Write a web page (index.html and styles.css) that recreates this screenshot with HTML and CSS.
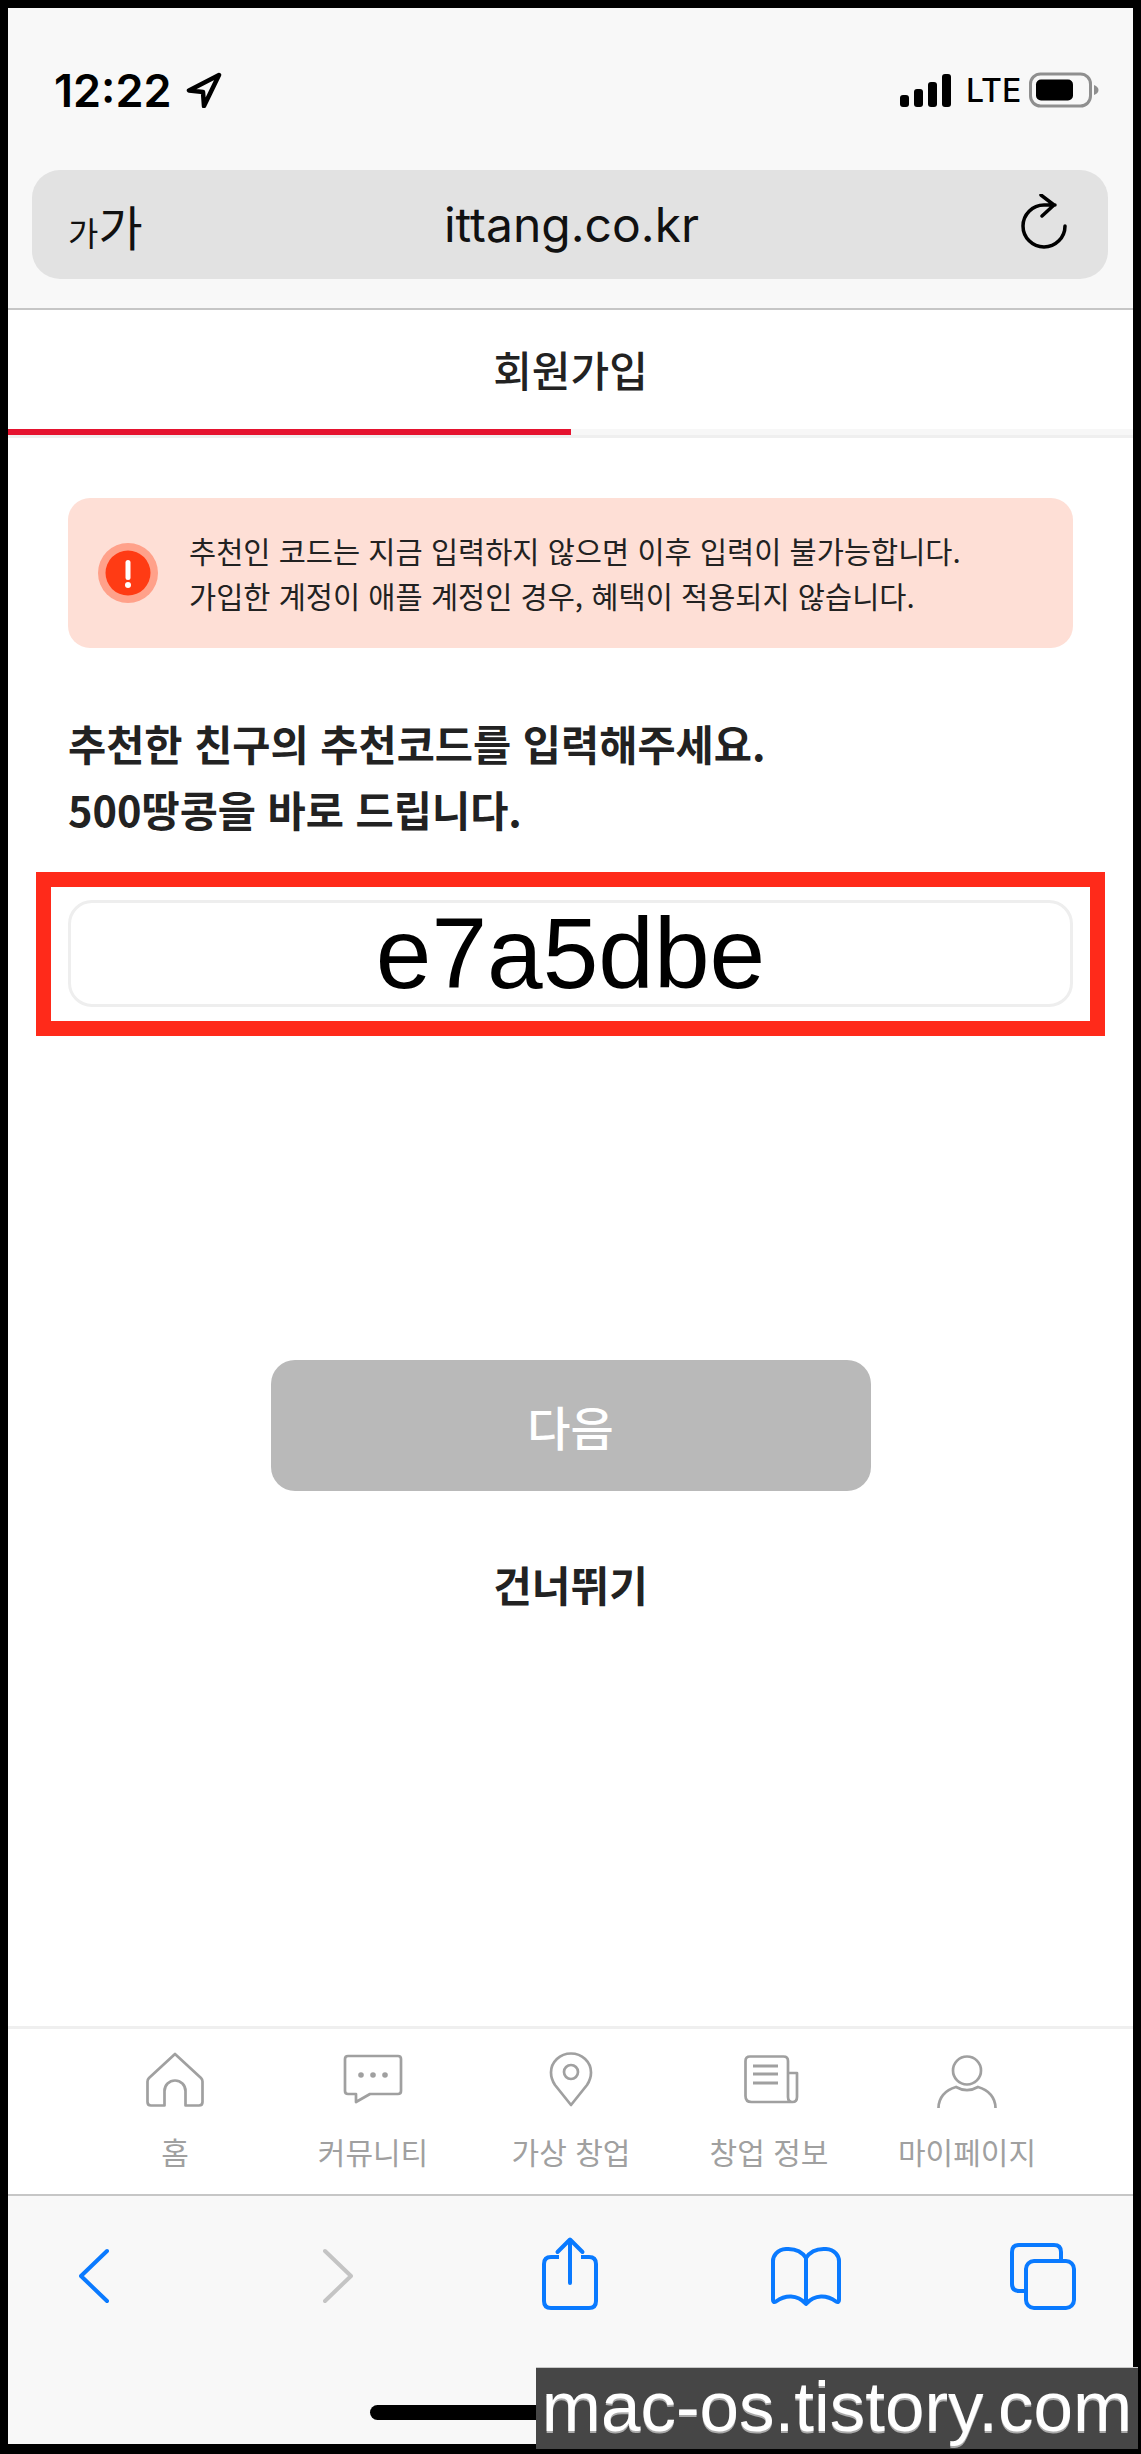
FILE: index.html
```html
<!DOCTYPE html>
<html lang="ko">
<head>
<meta charset="utf-8">
<title>회원가입</title>
<link rel="stylesheet" href="styles.css">
</head>
<body>
<div class="phone">
  <header class="browser-top">
    <div class="status">
      <div class="status-left">
        <span class="time">12:22</span>
        <svg class="loc" viewBox="0 0 36 36"><path d="M33 3 3 18.500l14 1.500 1 14z" fill="none" stroke="#000" stroke-width="4.500" stroke-linejoin="round"/></svg>
      </div>
      <div class="status-right">
        <svg class="signal" viewBox="0 0 51 34"><rect x="0" y="22" width="9" height="12" rx="3"/><rect x="14" y="16" width="9" height="18" rx="3"/><rect x="28" y="9" width="9" height="25" rx="3"/><rect x="42" y="1" width="9" height="33" rx="3"/></svg>
        <span class="lte">LTE</span>
        <svg class="battery" viewBox="0 0 70 36"><rect x="1.500" y="2" width="60" height="32" rx="10" fill="none" stroke="#8f8f8f" stroke-width="3"/><rect x="7" y="7.500" width="37" height="21" rx="5" fill="#000"/><path d="M65 13c3 1 4.500 3 4.500 5s-1.500 4-4.500 5z" fill="#8f8f8f"/></svg>
      </div>
    </div>
    <div class="urlbar">
      <span class="aa"><span class="aa-small">가</span><span class="aa-big">가</span></span>
      <span class="url">ittang.co.kr</span>
      <svg class="reload" viewBox="0 0 48 56"><path d="M45 32A21 21 0 1 1 24 11h11M21 1l13 10-12 11" fill="none" stroke="#000" stroke-width="3.500" stroke-linecap="round" stroke-linejoin="round"/></svg>
    </div>
  </header>

  <div class="title">회원가입</div>
  <div class="progress"><div class="progress-fill"></div></div>

  <main class="content">
    <div class="alert">
      <svg class="alert-icon" viewBox="0 0 60 60"><circle cx="30" cy="30" r="30" fill="#ffa18a"/><circle cx="30" cy="30" r="22.500" fill="#ff3b14"/><rect x="27.500" y="17" width="5" height="20" rx="2.500" fill="#fff"/><circle cx="30" cy="42" r="3" fill="#fff"/></svg>
      <p class="alert-text">추천인 코드는 지금 입력하지 않으면 이후 입력이 불가능합니다.<br>가입한 계정이 애플 계정인 경우, 혜택이 적용되지 않습니다.</p>
    </div>
    <h1 class="heading">추천한 친구의 추천코드를 입력해주세요.<br>500땅콩을 바로 드립니다.</h1>
    <div class="code-frame">
      <div class="code-input">e7a5dbe</div>
    </div>
    <button class="next" type="button">다음</button>
    <div class="skip">건너뛰기</div>
  </main>

  <nav class="tabbar">
    <div class="tab">
      <svg class="tab-icon" viewBox="0 0 60 56"><path d="M30 2 4 26q-1.500 1.500-1.500 3.500V50q0 3.500 3.500 3.500h13.500V39a10.500 10.500 0 0 1 21 0v14.500H54q3.500 0 3.500-3.500V29.500q0-2-1.500-3.500z" fill="none" stroke="#a0a0a0" stroke-width="2.700" stroke-linejoin="round"/></svg>
      <span class="tab-label">홈</span>
    </div>
    <div class="tab">
      <svg class="tab-icon" viewBox="0 0 60 56"><path d="M5 4h50q3 0 3 3v32q0 3-3 3H27l-14 8v-8H5q-3 0-3-3V7q0-3 3-3z" fill="none" stroke="#a0a0a0" stroke-width="2.700" stroke-linejoin="round"/><circle cx="18" cy="23" r="2.800" fill="#a0a0a0"/><circle cx="30" cy="23" r="2.800" fill="#a0a0a0"/><circle cx="42" cy="23" r="2.800" fill="#a0a0a0"/></svg>
      <span class="tab-label">커뮤니티</span>
    </div>
    <div class="tab">
      <svg class="tab-icon" viewBox="0 0 60 56"><path d="M30 53 14 33Q10 27 10 20.500a20 19 0 0 1 40 0Q50 27 46 33z" fill="none" stroke="#a0a0a0" stroke-width="2.700" stroke-linejoin="round"/><circle cx="30" cy="20" r="7" fill="none" stroke="#a0a0a0" stroke-width="2.700"/></svg>
      <span class="tab-label">가상 창업</span>
    </div>
    <div class="tab">
      <svg class="tab-icon" viewBox="0 0 60 56"><path d="M49 21h9v24q0 5-4.500 5-4.500 0-4.500-5V9q0-4.500-4.500-4.500H11q-4.500 0-4.500 4.500v35q0 6 6 6H54" fill="none" stroke="#a0a0a0" stroke-width="2.700" stroke-linejoin="round"/><path d="M14 14h25M14 22h25M14 31h25" fill="none" stroke="#a0a0a0" stroke-width="3"/></svg>
      <span class="tab-label">창업 정보</span>
    </div>
    <div class="tab">
      <svg class="tab-icon" viewBox="0 0 60 56"><circle cx="30" cy="18.500" r="14" fill="none" stroke="#a0a0a0" stroke-width="2.700"/><path d="M1.500 56C1.500 46 8 38 19 35c7 4 15 4 22 0C52 38 58.500 46 58.500 56" fill="none" stroke="#a0a0a0" stroke-width="2.700"/></svg>
      <span class="tab-label">마이페이지</span>
    </div>
  </nav>

  <footer class="toolbar">
    <div class="tool-row">
      <svg class="tool tool-back" viewBox="0 0 30 80"><path d="M28 15 2 40l26 25" fill="none" stroke="#0a7aff" stroke-width="4" stroke-linecap="round" stroke-linejoin="round"/></svg>
      <svg class="tool tool-fwd" viewBox="0 0 30 80"><path d="M2 15l26 25L2 65" fill="none" stroke="#c4c4c4" stroke-width="4" stroke-linecap="round" stroke-linejoin="round"/></svg>
      <svg class="tool tool-share" viewBox="0 0 56 80"><path d="M17 21H9q-7 0-7 7v37q0 7 7 7h38q7 0 7-7V28q0-7-7-7h-8" fill="none" stroke="#0a7aff" stroke-width="4"/><path d="M28 47V4M15.500 16 28 3.500 40.500 16" fill="none" stroke="#0a7aff" stroke-width="4" stroke-linecap="round" stroke-linejoin="round"/></svg>
      <svg class="tool tool-book" viewBox="0 0 70 80"><path d="M35 68V22C30 14 22 12.500 15 13 6 13.500 2 20 2 25v39q0 3 3 1.500C14 59 26 58 35 68c9-10 21-9 30-2.500q3 1.500 3-1.500V25c0-5-4-11.500-13-12-7-.5-15 1-20 9" fill="none" stroke="#0a7aff" stroke-width="4" stroke-linejoin="round"/></svg>
      <svg class="tool tool-tabs" viewBox="0 0 66 80"><path d="M15 55H9q-7 0-7-7V16q0-7 7-7h35q7 0 7 7v8" fill="none" stroke="#0a7aff" stroke-width="4"/><rect x="16" y="25" width="48" height="47" rx="8" fill="none" stroke="#0a7aff" stroke-width="4"/></svg>
    </div>
    <div class="home-indicator"></div>
  </footer>

  <div class="watermark">mac-os.tistory.com</div>
</div>
</body>
</html>
```
FILE: styles.css
```css
* { box-sizing: border-box; }
html, body { margin: 0; padding: 0; }
body { background: #000; width: 1141px; height: 2454px; overflow: hidden; font-family: "Noto Sans CJK KR", "Noto Sans", sans-serif; color: #222; }
svg { display: block; }

.phone { position: relative; margin: 8px; width: 1125px; height: 2436px; background: #fff; display: flex; flex-direction: column; }

.browser-top { background: #f8f8f8; height: 302px; padding: 62px 25px 0 24px; border-bottom: 2px solid #c6c6c6; }
.status { height: 40px; display: flex; justify-content: space-between; align-items: center; padding: 0 0 0 22px; }
.status-left { display: flex; align-items: center; gap: 14px; }
.time { font-family: Inter, sans-serif; font-weight: 600; font-size: 45px; line-height: 40px; color: #000; padding-top: 2px; }
.loc { width: 36px; height: 36px; }
.status-right { display: flex; align-items: center; margin-right: 9px; }
.signal { width: 51px; height: 34px; fill: #000; margin-top: -1px; }
.lte { font-family: Inter, sans-serif; font-weight: 500; font-size: 32px; line-height: 40px; color: #000; margin-left: 15px; width: 52px; padding-top: 2px; }
.battery { width: 70px; height: 36px; margin-left: 11px; }

.urlbar { margin-top: 60px; height: 109px; background: #e2e2e2; border-radius: 28px; display: flex; align-items: center; justify-content: space-between; padding: 0 40px 0 36px; }
.aa { width: 80px; color: #111; line-height: 1; display: flex; align-items: baseline; }
.aa-small { font-size: 33px; }
.aa-big { font-size: 48px; }
.url { font-family: Inter, sans-serif; font-size: 48px; color: #111; margin-left: -25px; }
.reload { width: 48px; height: 56px; margin-top: -6px; }

.title { height: 119px; display: flex; align-items: center; justify-content: center; font-size: 42px; font-weight: 500; color: #222; padding-bottom: 2px; }
.progress { height: 9px; background: #f7f7f7; border-bottom: 3px solid #efefef; }
.progress-fill { width: 50%; height: 6px; background: #e5132f; }

.content { flex: 1; padding: 60px 60px 0; display: flex; flex-direction: column; }
.alert { height: 150px; background: #fedfd6; border-radius: 22px; display: flex; align-items: center; padding-left: 30px; gap: 31px; }
.alert-icon { width: 60px; height: 60px; flex: none; }
.alert-text { margin: 0; font-size: 29.500px; line-height: 45px; color: #222; font-weight: 400; }
.heading { margin: 62px 0 0; font-size: 41.500px; line-height: 66px; font-weight: 700; color: #222; }
.code-frame { margin: 30px -32px 0; height: 164px; border: 15px solid #ff2a1a; padding: 13px 17px; }
.code-input { height: 107px; border: 3px solid #eee; border-radius: 24px; display: flex; align-items: center; justify-content: center; font-family: "Liberation Sans", Arial, sans-serif; font-size: 100px; color: #000; line-height: 1; padding-bottom: 2px; }
.next { margin: 324px auto 0; display: block; width: 600px; height: 131px; border: 0; border-radius: 24px; background: #b9b9b9; color: #fff; font-family: inherit; font-size: 47px; font-weight: 500; }
.skip { margin-top: 65px; text-align: center; font-size: 42px; line-height: 56px; font-weight: 700; color: #222; }

.tabbar { height: 168px; border-top: 3px solid #efefef; padding: 23px 67px 0 68px; display: grid; grid-template-columns: repeat(5, 198px); align-content: start; }
.tab { display: flex; flex-direction: column; align-items: center; }
.tab-icon { width: 60px; height: 56px; }
.tab-label { margin-top: 23px; font-size: 30px; line-height: 40px; color: #a0a0a0; white-space: nowrap; }

.toolbar { height: 250px; background: #f8f8f8; border-top: 2px solid #c6c6c6; padding-top: 40px; display: flex; flex-direction: column; align-items: flex-start; }
.tool-row { display: flex; height: 80px; }
.tool { height: 80px; flex: none; }
.tool-back { width: 30px; margin-left: 71px; }
.tool-fwd { width: 30px; margin-left: 214px; }
.tool-share { width: 56px; margin-left: 189px; }
.tool-book { width: 70px; margin-left: 173px; }
.tool-tabs { width: 66px; margin-left: 169px; }
.home-indicator { width: 400px; height: 15px; margin: 89px 0 0 362px; background: #000; border-radius: 8px; }

.watermark { position: absolute; right: -5px; bottom: -5px; width: 602px; height: 82px; background: #464646; border-top: 1px solid #c8c8c8; color: #fff; font-family: "Liberation Sans", Arial, sans-serif; font-size: 71px; line-height: 78px; text-align: center; white-space: nowrap; text-shadow: 0 2px 0 #aaa; }
```
